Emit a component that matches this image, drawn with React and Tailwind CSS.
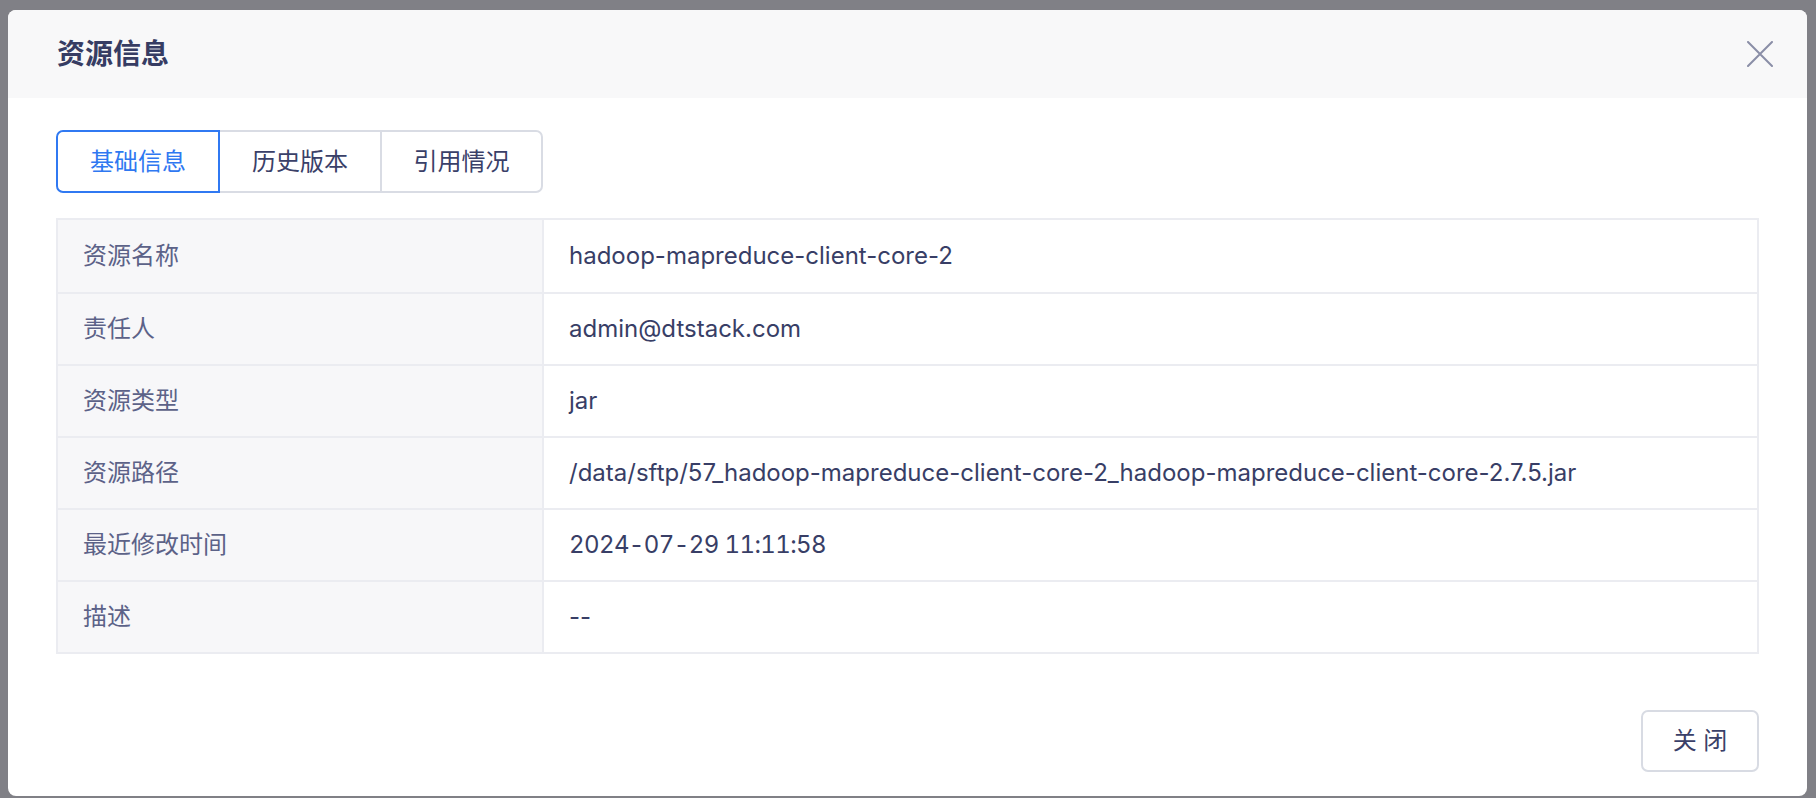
import React from "react";

const rows = [
  { label: "资源名称", value: "hadoop-mapreduce-client-core-2" },
  { label: "责任人", value: "admin@dtstack.com" },
  { label: "资源类型", value: "jar" },
  { label: "资源路径", value: "/data/sftp/57_hadoop-mapreduce-client-core-2_hadoop-mapreduce-client-core-2.7.5.jar" },
  { label: "最近修改时间", value: "2024-07-29 11:11:58", nums: true },
  { label: "描述", value: "--" },
];

const font = { fontFamily: '"Inter", "Noto Sans CJK SC", sans-serif' };

const App = () => {
  return (
    <div className="w-full h-[798px] bg-[#808086] pt-[10px] pl-[8px] overflow-hidden" style={font}>
      <div className="w-[1799px] h-[786px] bg-white rounded-[8px] overflow-hidden flex flex-col">
        {/* header */}
        <div className="h-[88px] shrink-0 bg-[#f8f8f9] flex items-center justify-between pl-[49px] pr-[34px]">
          <h2 className="text-[28px] font-bold text-[#363c63] leading-none">资源信息</h2>
          <button className="w-[26px] h-[26px] flex items-center justify-center">
            <svg width="26" height="26" viewBox="0 0 26 26" fill="none">
              <path d="M1 1 L25 25 M25 1 L1 25" stroke="#8a8ea7" strokeWidth="2" strokeLinecap="round" />
            </svg>
          </button>
        </div>

        {/* body */}
        <div className="flex-1 px-[48px] pt-[32px] flex flex-col">
          <div className="flex h-[63px] text-[24px]">
            <div className="w-[164px] flex items-center justify-center border-2 border-[#3079f2] rounded-l-[7px] text-[#2f78f1]">
              基础信息
            </div>
            <div className="w-[162px] flex items-center justify-center border-y-2 border-r-2 border-[#d9dce4] text-[#3a4068]">
              历史版本
            </div>
            <div className="w-[161px] flex items-center justify-center border-y-2 border-r-2 border-[#d9dce4] rounded-r-[7px] text-[#3a4068]">
              引用情况
            </div>
          </div>

          <div className="mt-[25px] border-2 border-[#ebecf1] text-[24px]">
            {rows.map((row, i) => (
              <div key={row.label} className={`flex h-[72px] ${i > 0 ? "border-t-2 border-[#ebecf1]" : ""}`}>
                <div className="w-[486px] shrink-0 bg-[#f7f7f9] border-r-2 border-[#ebecf1] flex items-center pl-[25px] text-[#5c6288]">
                  {row.label}
                </div>
                <div className={`flex-1 flex items-center pl-[25px] text-[#383e66] ${row.nums ? "tabular-nums tracking-[-0.6px]" : ""}`}>
                  {row.value}
                </div>
              </div>
            ))}
          </div>

          <div className="flex justify-end mt-[56px]">
            <button className="w-[118px] h-[62px] border-2 border-[#d8dbe3] rounded-[7px] text-[24px] text-[#3a4068] bg-white">
              关 闭
            </button>
          </div>
        </div>
      </div>
    </div>
  );
};

export default App;
